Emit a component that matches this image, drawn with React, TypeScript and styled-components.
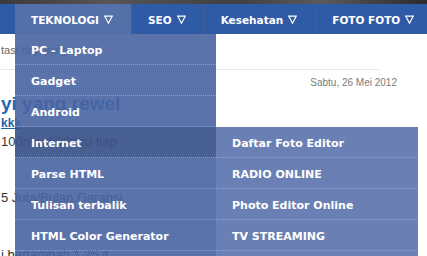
import React from "react";
import styled, { createGlobalStyle } from "styled-components";

const GlobalStyle = createGlobalStyle`
  html, body { margin: 0; padding: 0; background: #fff; overflow: hidden; }
  body { font-family: "DejaVu Sans", Verdana, sans-serif; }
`;

const Page = styled.div`
  position: relative;
  width: 427px;
  height: 256px;
  overflow: hidden;
  background: #fff;
`;

const HeaderStrip = styled.div`
  height: 4px;
  background: linear-gradient(90deg, #3a3a3a, #565656 25%, #404040 55%, #5a5a5a 75%, #2c2c2c);
`;

const NavBar = styled.nav`
  position: relative;
  z-index: 2;
  display: flex;
  height: 30px;
  padding-left: 15px;
  background: #2f5aa6;
`;

const NavItem = styled.div<{ $active?: boolean }>`
  position: relative;
  flex: none;
  display: flex;
  align-items: center;
  gap: 5px;
  padding: 1px 18px 0 16px;
  background: ${(p) => (p.$active ? "#5470a9" : "transparent")};
  border-right: 1px solid #405d96;
  color: #fff;
  font: bold 10.5px "DejaVu Sans", Verdana, sans-serif;
  white-space: nowrap;
`;

const Menu = styled.ul<{ $width: number; $tone: "base" | "sub" }>`
  position: absolute;
  top: 100%;
  left: 0;
  width: ${(p) => p.$width}px;
  margin: 0;
  padding: 0 0 6px;
  list-style: none;
  background: ${(p) => (p.$tone === "sub" ? "rgba(90, 114, 172, 0.9)" : "rgba(72, 100, 161, 0.9)")};
`;

const SubMenu = styled(Menu)`
  top: 0;
  left: 100%;
`;

const MenuItem = styled.li<{ $hover?: boolean }>`
  position: relative;
  display: flex;
  align-items: center;
  height: 31px;
  box-sizing: border-box;
  padding: 2px 0 0 16px;
  margin-bottom: 0;
  border-bottom: 1px dotted #8ea1c9;
  background: ${(p) => (p.$hover ? "rgba(40, 58, 100, 0.35)" : "transparent")};
  color: #fff;
  font: bold 11px "DejaVu Sans", Verdana, sans-serif;
  white-space: nowrap;
`;

const Content = styled.main`
  display: flex;
  flex-direction: column;
  padding-left: 1px;
`;

const Crumb = styled.div`
  margin-top: 10px;
  font: 11px/13px "Liberation Sans", Arial, sans-serif;
  color: #666;
`;

const Rule = styled.div`
  margin-top: 12px;
  width: 378px;
  height: 1px;
  background: #e6e6e6;
`;

const DateLine = styled.div`
  margin-top: 7px;
  width: 396px;
  text-align: right;
  font: 10px/12px "Liberation Sans", Arial, sans-serif;
  color: #7a7a7a;
`;

const Title = styled.h1`
  margin: 4px 0 0;
  font: bold 19px/22px "Liberation Sans", Arial, sans-serif;
  color: #2368b0;
`;

const Link = styled.a`
  margin-top: 1px;
  font: bold 12px/14px "Liberation Sans", Arial, sans-serif;
  color: #1a62a6;
  text-decoration: underline;
`;

const Para = styled.p<{ $top: number }>`
  margin: ${(p) => p.$top}px 0 0;
  font: 13px/16px "Liberation Sans", Arial, sans-serif;
  color: #333;
`;

const Caret = () => (
  <svg width="9" height="9" viewBox="0 0 9 9" aria-hidden="true">
    <path d="M0.8 1.2 H8.2 L4.5 8.2 Z" fill="none" stroke="#fff" strokeWidth="1.2" strokeLinejoin="miter" />
  </svg>
);

const mainItems = ["PC - Laptop", "Gadget", "Android", "Internet", "Parse HTML", "Tulisan terbalik", "HTML Color Generator"];
const subItems = ["Daftar Foto Editor", "RADIO ONLINE", "Photo Editor Online", "TV STREAMING"];

export default function App() {
  return (
    <Page>
      <GlobalStyle />
      <HeaderStrip />
      <NavBar>
        <NavItem $active>
          TEKNOLOGI <Caret />
          <Menu $width={201} $tone="base">
            {mainItems.map((label) => (
              <MenuItem key={label} $hover={label === "Internet"}>
                {label}
                {label === "Internet" && (
                  <SubMenu $width={202} $tone="sub">
                    {subItems.map((s) => (
                      <MenuItem key={s}>{s}</MenuItem>
                    ))}
                  </SubMenu>
                )}
              </MenuItem>
            ))}
          </Menu>
        </NavItem>
        <NavItem>
          SEO <Caret />
        </NavItem>
        <NavItem>
          Kesehatan <Caret />
        </NavItem>
        <NavItem>
          FOTO FOTO <Caret />
        </NavItem>
      </NavBar>
      <Content>
        <Crumb>tasi bayi yang rewel</Crumb>
        <Rule />
        <DateLine>Sabtu, 26 Mei 2012</DateLine>
        <Title>yi yang rewel</Title>
        <Link>kkk</Link>
        <Para $top={4}>100ribu-500ribu tiap</Para>
        <Para $top={40}>5 Juta/Bulan.Garansi</Para>
        <Para $top={41}>i bertambah 1,25 jt</Para>
      </Content>
    </Page>
  );
}
